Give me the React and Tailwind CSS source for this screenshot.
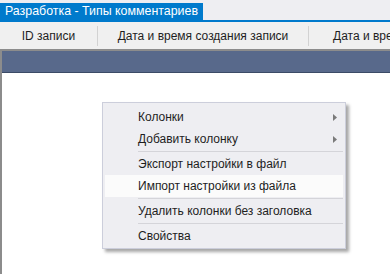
const items = [
  { label: 'Колонки', arrow: true },
  { label: 'Добавить колонку', arrow: true },
  { sep: true },
  { label: 'Экспорт настройки в файл' },
  { label: 'Импорт настройки из файла', hover: true },
  { sep: true },
  { label: 'Удалить колонки без заголовка' },
  { sep: true },
  { label: 'Свойства' },
];

function Arrow() {
  return (
    <svg width="4" height="7" viewBox="0 0 4 7" className="block">
      <polygon points="0,0 4,3.5 0,7" fill="#7a7a7a" />
    </svg>
  );
}

export default function App() {
  return (
    <div className="relative w-[390px] h-[274px] overflow-hidden bg-white text-[#1e1e1e] font-['Segoe_UI','Liberation_Sans',sans-serif]">
      {/* title tab */}
      <div className="h-[20px] bg-[#eeeef2] flex items-end">
        <div className="w-[203px] h-[17px] bg-[#007acc] text-white text-[12.4px] leading-[17px] pl-[5px] whitespace-nowrap overflow-hidden">
          Разработка - Типы комментариев
        </div>
      </div>
      <div className="h-[2px] bg-[#007acc]" />

      {/* grid header */}
      <div className="h-[27px] bg-[#f0f0f0] flex items-center text-[12px] whitespace-nowrap">
        <div className="w-[97px] text-center">ID записи</div>
        <div className="w-px h-[20px] bg-[#d2d2d2]" />
        <div className="w-[210px] text-center">Дата и время создания записи</div>
        <div className="w-px h-[20px] bg-[#d2d2d2]" />
        <div className="flex-1 pl-[24px] overflow-hidden">Дата и время изменения записи</div>
      </div>

      {/* grid body */}
      <div className="h-full border-l-2 border-t-2 border-[#8c8c8c]">
        <div className="h-[21px] bg-[#58698b]" />
        <div className="h-px bg-[#3b4b66]" />
      </div>

      {/* context menu */}
      <div className="absolute left-[102px] top-[102px] w-[244px] border border-[#cccedb] bg-[#eeeef2] px-[2px] pt-[3px] pb-[1px] shadow-[3px_3px_3px_rgba(0,0,0,0.35)] text-[12px]">
        {items.map((it, i) =>
          it.sep ? (
            <div key={i} className="h-[3px] flex items-center pl-[33px]">
              <div className="h-px w-full bg-[#d4d4d9]" />
            </div>
          ) : (
            <div
              key={i}
              className={`h-[22px] flex items-center justify-between pl-[33px] pr-[6px] ${it.hover ? 'bg-[#fbfbfb]' : ''}`}
            >
              <span>{it.label}</span>
              {it.arrow && <Arrow />}
            </div>
          )
        )}
      </div>
    </div>
  );
}
